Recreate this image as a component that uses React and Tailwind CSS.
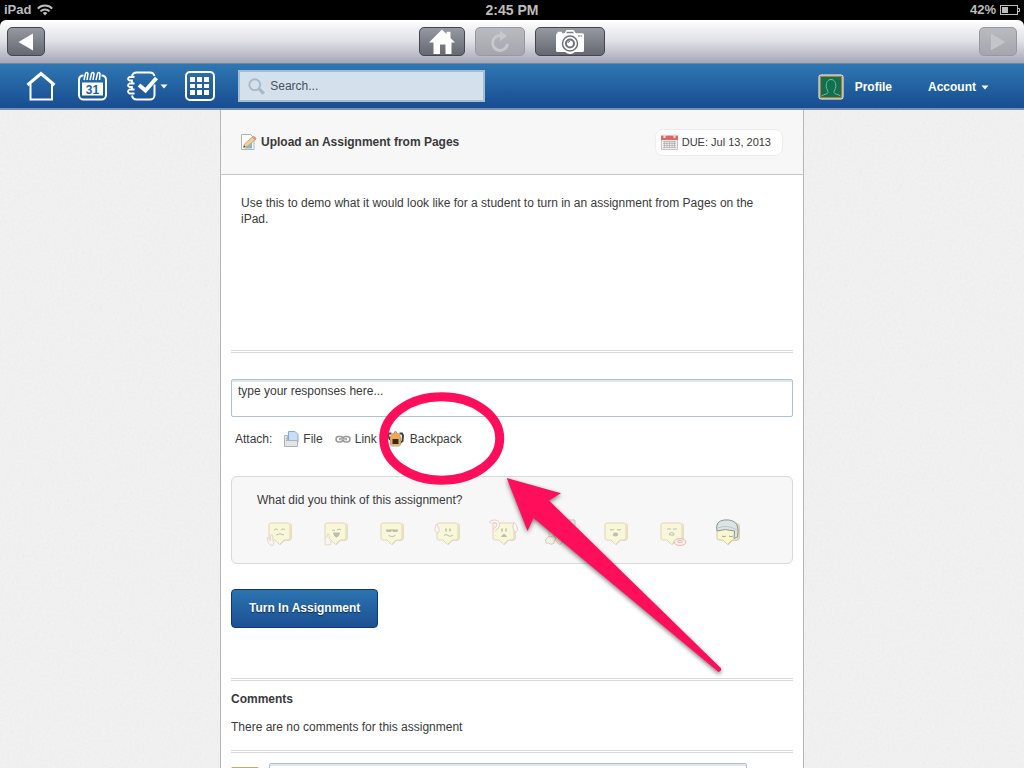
import { useState } from 'react';

const MOODS = [
  { id: 'victory', label: 'Done' },
  { id: 'thumbs', label: 'Liked it' },
  { id: 'cool', label: 'Easy' },
  { id: 'sweat', label: 'Hard' },
  { id: 'confused', label: 'Confused' },
  { id: 'busy', label: 'Busy' },
  { id: 'bored', label: 'Bored' },
  { id: 'hungry', label: 'Hungry' },
  { id: 'sleepy', label: 'Sleepy' },
];

function StatusBar() {
  return (
    <div className="grid grid-cols-3 items-center h-5 shrink-0 bg-black text-[#bcbcbc] font-bold text-[13px] leading-5">
      <div className="flex items-center gap-1.5 pl-1">
        <span>iPad</span>
        <svg width="16" height="12" viewBox="0 0 16 12" fill="none" stroke="#bcbcbc" strokeWidth="2">
          <path d="M0.8 4.6C4.8 0.6 11.2 0.6 15.2 4.6" />
          <path d="M3.5 7.4C6 5 10 5 12.5 7.4" />
          <path d="M5.6 9L8 11.6 10.4 9C9 7.8 7 7.8 5.6 9Z" fill="#bcbcbc" stroke="none" />
        </svg>
      </div>
      <span className="text-center text-sm leading-5">2:45 PM</span>
      <div className="flex items-center justify-end gap-1 pr-1">
        <span>42%</span>
        <svg width="20" height="10" viewBox="0 0 20 10" fill="none" stroke="#bcbcbc">
          <rect x="0.5" y="0.5" width="17" height="9" />
          <path d="M18 3.5h1.5v3H18" />
          <rect x="2" y="2" width="6" height="6" fill="#bcbcbc" stroke="none" />
        </svg>
      </div>
    </div>
  );
}

function ToolButton({ label, className, disabled, children }) {
  return (
    <button
      type="button"
      aria-label={label}
      disabled={disabled}
      className={`flex items-center justify-center h-[29px] rounded-[5px] border ${
        disabled
          ? 'border-[#96989e] bg-linear-to-b from-[#b9bbc0] to-[#a3a6ad]'
          : 'border-[#43464d] bg-linear-to-b from-[#9699a0] to-[#646972]'
      } ${className}`}
    >
      {children}
    </button>
  );
}

function BrowserBar() {
  return (
    <div className="shrink-0 bg-black">
      <div className="flex items-center justify-between h-11 px-[7px] rounded-t-md border-b border-[#7c8194] bg-linear-to-b from-white via-[#dfe0e6] to-[#a4a7b6]">
        <ToolButton label="Back" className="w-[38px]">
          <svg width="16" height="18" viewBox="0 0 16 18"><path d="M15 0.5v17L0.5 9z" fill="#fff" /></svg>
        </ToolButton>
        <div className="flex gap-2.5">
          <ToolButton label="Home" className="w-[46px]">
            <svg width="26" height="25" viewBox="0 0 26 25">
              <path d="M13 0.5L17.5 5V2.8h4V9L26 13.5h-3.5V25h-6v-9.5h-5.5V25H4.5V13.5H0z" fill="#fff" />
            </svg>
          </ToolButton>
          <ToolButton label="Reload" className="w-[50px]" disabled>
            <svg width="20" height="24" viewBox="0 0 20 24" fill="none">
              <path d="M11 5.5A7.5 7.5 0 1 0 17.5 14" stroke="#c6c8cc" strokeWidth="3" />
              <path d="M10 0.5L17 6 10 11z" fill="#c6c8cc" />
            </svg>
          </ToolButton>
          <ToolButton label="Take picture" className="w-[70px]">
            <svg width="28" height="24" viewBox="0 0 28 24" fill="none">
              <path d="M1.5 1.8h4.5v1.5h2.5L10.500 0h7l2.500 3.300h6.500a1.500 1.500 0 0 1 1.500 1.500v15.700a1.500 1.500 0 0 1-1.500 1.500H19a8 8 0 0 1-10 0H1.500A1.500 1.500 0 0 1 0 20.500V4.800a1.500 1.500 0 0 1 1.500-1.500z" fill="#fff" />
              <path d="M10.5 2.5h7" stroke="#7b7f87" strokeWidth="1.5" />
              <circle cx="14" cy="13.5" r="7.5" stroke="#6d7179" strokeWidth="1.5" />
              <circle cx="14" cy="13.5" r="4" stroke="#6d7179" strokeWidth="2" />
              <path d="M12 13a2 2 0 0 1 2-1.8" stroke="#6d7179" />
              <path d="M22 6h4" stroke="#6d7179" strokeDasharray="2 0.5" />
            </svg>
          </ToolButton>
        </div>
        <ToolButton label="Forward" className="w-[38px]" disabled>
          <svg width="16" height="18" viewBox="0 0 16 18"><path d="M1 0.5v17L15.5 9z" fill="#c3c5ca" /></svg>
        </ToolButton>
      </div>
    </div>
  );
}

function Caret() {
  return <svg width="8" height="5" viewBox="0 0 8 5"><path d="M0.5 0.5h7L4 4.5z" fill="#fff" /></svg>;
}

function NavBar() {
  const [query, setQuery] = useState('');

  return (
    <nav className="flex items-center justify-between shrink-0 h-[46px] pl-[26px] pr-[35px] border-b-2 border-[#7b8fae] bg-linear-to-b from-[#2f77b2] to-[#184d91] text-white text-xs font-bold">
      <div className="flex items-center">
        <a href="#home" aria-label="Home" className="mr-[21px]">
          <svg width="30" height="30" viewBox="0 0 30 30" fill="none" stroke="#fff">
            <path d="M4.500 13v15.500h21.500V13" strokeWidth="2" />
            <path d="M1.500 14L15 2.500 28.500 14" strokeWidth="3" />
          </svg>
        </a>
        <a href="#calendar" aria-label="Calendar" className="mr-[18px]">
          <svg width="31" height="30" viewBox="0 0 31 30" fill="none" stroke="#fff" strokeWidth="2">
            <path d="M6.500 4.500C3 4.500 2 6.500 2 9v15a4.500 4.500 0 0 0 4.500 4.500h18A4.500 4.500 0 0 0 29 24V9c0-2.500-1-4.500-4.500-4.500" />
            <path d="M7 9l1.500-6.500q1.500-2 2.500 0L10 9m3 0l1.500-6.500q1.500-2 2.500 0L16 9m3 0l1.500-6.500q1.500-2 2.500 0L22.500 9" strokeWidth="1.5" />
            <rect x="5" y="11.5" width="21" height="13" fill="#fff" stroke="none" />
            <text x="15.5" y="22.5" textAnchor="middle" fontSize="12" fontWeight="700" fill="#24609f" stroke="none">31</text>
          </svg>
        </a>
        <button type="button" aria-label="Assignments" className="flex items-center gap-[2px] mr-[17px]">
          <svg width="32" height="30" viewBox="0 0 32 30" fill="none" stroke="#fff">
            <path d="M6 5.500C6.500 2.500 8 1.500 10.500 1.500h13.500c2.500 0 4 1.500 4.500 3.500M28.500 13.500V24a4.500 4.500 0 0 1-4.500 4.500H10.500C8 28.500 6.500 27 6 24.500" strokeWidth="2" />
            <path d="M8.500 6H3.500Q0.500 8 3.500 9.500H6V12M8.500 12.500H3.500Q0.500 14.500 3.500 16H6v2.500M8.500 18.500H3.500Q0.500 20.500 3.500 22.500H8.500" strokeWidth="1.8" />
            <path d="M13 14l6.500 5.500L30.500 7" strokeWidth="4" />
          </svg>
          <Caret />
        </button>
        <a href="#apps" aria-label="Apps" className="mr-[23px]">
          <svg width="30" height="30" viewBox="0 0 30 30" fill="none">
            <rect x="1" y="1" width="28" height="28" rx="4" stroke="#fff" strokeWidth="2" />
            <path d="M5 6h5v5H5zM12 6h5v5h-5zM19 6h5v5h-5zM5 13h5v4H5zM12 13h5v4h-5zM19 13h5v4h-5zM5 19h5v5H5zM12 19h5v5h-5zM19 19h5v5h-5z" fill="#fff" />
          </svg>
        </a>
        <label className="flex items-center gap-[5px] w-[247px] h-8 pl-2 border-2 border-[#a3bdd3] bg-[#d4e0eb]">
          <svg width="19" height="19" viewBox="0 0 19 19" fill="none" stroke="#a6b8c8">
            <circle cx="7.500" cy="7.500" r="6" strokeWidth="2" />
            <path d="M12 12l5.500 5.500" strokeWidth="3.5" />
          </svg>
          <input
            type="text"
            aria-label="Search"
            placeholder="Search..."
            value={query}
            onChange={(e) => setQuery(e.target.value)}
            className="w-full bg-transparent text-xs font-normal text-[#45525f] placeholder:text-[#45525f] focus:outline-none"
          />
        </label>
      </div>
      <div className="flex items-center gap-9 pt-0.5">
        <a href="#profile" className="flex items-center gap-[11px]">
          <svg width="26" height="26" viewBox="0 0 26 26" fill="none">
            <rect x="0.5" y="0.5" width="25" height="25" rx="3" fill="#fffdf4" />
            <rect x="1.5" y="1.5" width="23" height="23" rx="1" fill="#a5803f" />
            <rect x="3" y="3" width="20" height="20" fill="#10704f" />
            <path d="M3.500 22c2.500-2 6-1.500 6.500-3.500.3-1.500-1.500-3-1.800-6C8 8 10 5.500 13 5.500s5 2.500 4.800 7c-.3 3-2 4.500-1.800 6 .5 2 4 1.500 6.500 3.500" stroke="#7fb6a1" />
          </svg>
          Profile
        </a>
        <button type="button" className="flex items-center gap-[5px]">
          Account
          <Caret />
        </button>
      </div>
    </nav>
  );
}

const FACES = {
  victory: (
    <>
      <path d="M11 12q2-2.500 4 0M18 12q2-2.500 4 0M13 17q4-2.500 8 0" />
      <path d="M7 27l-2-3-1-4.500 2 .5 1.500 3v-6h2l.5 6 1 1.500-1 3z" fill="#faf6ea" stroke="#d8bd92" />
    </>
  ),
  thumbs: (
    <>
      <path d="M13 12l3 .5M18 12q2-2 4 0" />
      <path d="M14.500 15h6q-1 4-3 4t-3-4z" fill="#8d8264" />
      <path d="M6 27v-7l2-1 .5-3H10l.5 5 1.500 1v4.500z" fill="#faf6ea" stroke="#d8bd92" />
    </>
  ),
  cool: (
    <>
      <path d="M11 12h5v1.500h-4zM18 12h5l-1 1.500h-4zM15 12h4" fill="#8d8264" />
      <path d="M13.500 17.500q3.500 2.500 7 0" />
    </>
  ),
  sweat: (
    <>
      <path d="M15 10.500v3M19 10.500v3" strokeWidth="1.5" />
      <path d="M13 17.500q2-2 4 0t5-.5" />
      <path d="M5.500 6Q3 11 4 13t3.500 1.500Q9.500 12 5.500 6z" fill="#fafafa" stroke="#e0a896" />
    </>
  ),
  confused: (
    <>
      <path d="M15 10.500v3M19 10.500v3" strokeWidth="1.5" />
      <path d="M14.500 18.500q2.500-4 5 0z" fill="#8d8264" />
      <path d="M3.500 5.500Q5 2.500 9 3.500t1 6L7.500 11.500v2M7 17v.5" stroke="#dba994" strokeWidth="3.5" />
      <path d="M3.500 5.500Q5 2.500 9 3.500t1 6L7.500 11.500v2M7 17v.5" stroke="#fff" strokeWidth="1.5" />
      <path d="M27 4Q31 8 30.500 12t-4 0Q25 8 27 4z" fill="#fafafa" stroke="#dba994" />
    </>
  ),
  busy: (
    <>
      <path d="M15 12v2M20 12v2M14 18h6" />
      <path d="M4 20q2-3 4-1 2-3 4 0 2 2-1 4 1 3-2 3-2 1-3-1-4 1-3-2-2-1 1-3z" fill="#f5eee4" stroke="#b09c76" />
      <path d="M26 2h6v6l-4 3" stroke="#8d9ca2" fill="#d3dcdf" />
    </>
  ),
  bored: (
    <>
      <path d="M11 11.500q2 1 4 0M18 11.500q2 1 4 0" />
      <ellipse cx="16.500" cy="16.500" rx="2.200" ry="1.500" fill="#8d8264" />
    </>
  ),
  hungry: (
    <>
      <path d="M12 11h4M18 11h4M14.500 15.500q2.500-2 4.500 0v1.500h-4.500z" />
      <ellipse cx="25" cy="24" rx="6" ry="3.500" fill="#f7e3da" stroke="#cf7f6c" />
      <ellipse cx="25" cy="23.500" rx="2.500" ry="1" fill="#f6f6f6" stroke="#cf7f6c" />
    </>
  ),
  sleepy: (
    <>
      <path d="M11 18q2 1.500 4 0M18 18q2 1.500 4 0" />
      <path d="M6 13Q4 3 13 2q10-1 13 5 2 4 .5 12l-3.500 1.500.5-7.500Q14 10 6 13z" fill="#d2dddd" stroke="#5d6e70" />
      <path d="M7 10q9-4 19 2" stroke="#a3b2b2" />
    </>
  ),
};

function MoodIcon({ id }) {
  return (
    <svg width="34" height="30" viewBox="0 0 34 30" fill="none" stroke="#8d8264" className={id === 'sleepy' ? 'opacity-70' : 'opacity-50'}>
      <path d="M27 6q1.500 0 1.500 2v12q0 2-2 2.500h-5l-4.500 4.500" fill="#e9dfb8" stroke="#d6c48d" />
      <path d="M8 5h17a2 2 0 0 1 2 2v13a2 2 0 0 1-2 2h-4l-4.500 4.500L12 22H8a2 2 0 0 1-2-2V7a2 2 0 0 1 2-2z" fill="#fbf7bd" stroke="#cdb582" />
      {FACES[id]}
    </svg>
  );
}

function Divider() {
  return <div className="h-[3px] border-y border-[#d9d9d9]" />;
}

function AssignmentHeader() {
  return (
    <header className="flex items-center justify-between h-[65px] px-5 border-b border-[#c6c6c6] bg-[#f7f7f7]">
      <h1 className="flex items-center gap-1 text-xs font-bold">
        <svg width="16" height="16" viewBox="0 0 16 16" fill="none">
          <path d="M0.500 0.500h9l3.500 3.500v11.500H0.500z" fill="#fdfefe" stroke="#a9b6b6" />
          <path d="M3 14.500l8-6v6z" fill="#8fb4cc" />
          <path d="M2.500 13.500l1-3.500 8.500-7.500q2.500 0 3 2.500L6 12.500z" fill="#f0d19c" stroke="#c0a880" />
          <path d="M12 2.500q2.500 0 3 2.500l-1.500 1-2.500-2.700z" fill="#d9988a" />
          <path d="M2.500 13.500l.5-2 1.500 1.300z" fill="#444" />
        </svg>
        Upload an Assignment from Pages
      </h1>
      <div className="flex items-center gap-1 h-[27px] pl-[5px] pr-[11px] rounded-lg border border-[#ededed] bg-white text-[11px]">
        <svg width="17" height="16" viewBox="0 0 17 16" fill="none">
          <path d="M0.500 5h16v10.500H0.500z" fill="#f0eeee" stroke="#c9c4c4" />
          <path d="M0 1.500h17V6H0z" fill="#e06666" />
          <path d="M3.500 0v4M13.500 0v4" stroke="#f7dede" strokeWidth="2" />
          <path d="M2 7.500h13M2 9.500h13M2 11.500h13M2 13.500h13M3.500 7v7M6 7v7M8.500 7v7M11 7v7M13.500 7v7" stroke="#b5b0b0" strokeWidth="0.8" />
        </svg>
        DUE: Jul 13, 2013
      </div>
    </header>
  );
}

function AttachBar() {
  return (
    <div className="flex items-center mt-3.5 pl-1 h-4">
      <span>Attach:</span>
      <a href="#file" className="flex items-center gap-1 ml-3">
        <svg width="15" height="16" viewBox="0 0 15 16" fill="none">
          <path d="M4.500 0.500h6.500l3 3v8H4.500z" fill="#c9def5" stroke="#8aa9cf" />
          <path d="M0.500 4.500h3v5h10v6H0.500z" fill="#e4e4e4" stroke="#a9b4bd" />
          <path d="M2 7.500h1M2 9.500h1" stroke="#a9b4bd" />
        </svg>
        File
      </a>
      <a href="#link" className="flex items-center gap-1 ml-3">
        <svg width="16" height="9" viewBox="0 0 16 9" fill="none" stroke="#9a9a9a" strokeWidth="1.5">
          <rect x="1" y="1.500" width="7" height="5.500" rx="2.700" />
          <rect x="8" y="1.500" width="7" height="5.500" rx="2.700" />
          <path d="M4 4.200h8" stroke="#8c8c8c" strokeWidth="2" />
          <path d="M4.500 4.200h7" stroke="#e2e2e2" strokeWidth="0.8" />
        </svg>
        Link
      </a>
      <a href="#backpack" className="flex items-center gap-1.5 ml-2.5">
        <svg width="17" height="16" viewBox="0 0 17 16" fill="none">
          <path d="M4.500 2.500H2L1 4l2 5M12.500 2.500H15l1 2L15.500 10l-2 1.500" stroke="#3c4148" strokeWidth="2" />
          <path d="M7 1.500q1.500-1.500 3 0" stroke="#8e6127" />
          <path d="M3.500 7Q4 2 8.500 2T13.500 7v6q0 2-2 2h-6q-2 0-2-2z" fill="#f0ab50" stroke="#d99a4a" />
          <path d="M5.500 8h6v5h-6z" fill="#38291a" />
          <path d="M4 14.500h9" stroke="#c9bfae" strokeWidth="1.5" />
        </svg>
        Backpack
      </a>
    </div>
  );
}

// circle and arrow pointing out the backpack link
function Annotation() {
  return (
    <svg width="582" height="658" viewBox="221 110 582 658" fill="none" aria-hidden="true" className="absolute top-0 left-0 pointer-events-none">
      <ellipse cx="441.7" cy="438.5" rx="58" ry="41.7" stroke="#ff0f5b" strokeWidth="9" />
      <path
        d="M506.7 478L561 493.3 549 500.500L721 668.300Q722 671.500 718.500 672L533.500 518 527.500 531Z"
        fill="#ff0f5b"
        className="drop-shadow-[0_2px_2px_rgba(0,0,0,0.5)]"
      />
    </svg>
  );
}

function App() {
  const [answer, setAnswer] = useState('');
  const [mood, setMood] = useState(null);
  const [comment, setComment] = useState('');

  return (
    <div className="flex flex-col h-screen overflow-hidden bg-[#f2f2f2] font-['Liberation_Sans',Arial,sans-serif] text-xs leading-4 text-[#3a3a3a]">
      <StatusBar />
      <BrowserBar />
      <NavBar />
      <div className="relative flex-1 min-h-0">
        {/* paper grain */}
        <svg width="100%" height="100%" aria-hidden="true" className="absolute inset-0 opacity-8">
          <filter id="grain">
            <feTurbulence type="fractalNoise" baseFrequency="0.4" numOctaves="2" />
            <feColorMatrix type="saturate" values="0" />
          </filter>
          <rect width="100%" height="100%" filter="url(#grain)" />
        </svg>
        <main className="relative w-full max-w-[584px] h-full mx-auto border-x border-[#b4b6ba] bg-white">
          <AssignmentHeader />
          <p className="px-5 pt-5 h-[175px]">
            Use this to demo what it would look like for a student to turn in an assignment from Pages on the iPad.
          </p>
          <div className="px-2.5">
            <Divider />
            <textarea
              aria-label="Response"
              placeholder="type your responses here..."
              value={answer}
              onChange={(e) => setAnswer(e.target.value)}
              className="block w-full h-[38px] mt-[26px] px-1.5 py-[3px] resize-none rounded-xs border border-[#adc3d3] bg-white shadow-[inset_0_2px_1px_#dfe5e9] placeholder:text-[#3a3a3a] focus:outline-none"
            />
            <AttachBar />
            <fieldset className="block mt-[29px] h-[88px] px-[25px] pt-[15px] rounded-md border border-[#d9d9d9] bg-[#f7f7f7]">
              <p>What did you think of this assignment?</p>
              <div className="flex gap-[22px] mt-2.5 pl-1.5">
                {MOODS.map((m) => (
                  <button
                    key={m.id}
                    type="button"
                    aria-label={m.label}
                    aria-pressed={mood === m.id}
                    onClick={() => setMood(m.id)}
                  >
                    <MoodIcon id={m.id} />
                  </button>
                ))}
              </div>
            </fieldset>
            <button
              type="submit"
              className="block h-[39px] mt-[25px] px-[17px] pb-0.5 rounded-sm border border-[#12396e] bg-linear-to-b from-[#2c74b0] to-[#1c5093] text-white font-bold [text-shadow:0_1px_1px_#0d2b52]"
            >
              Turn In Assignment
            </button>
            <div className="mt-[50px]"><Divider /></div>
            <h2 className="mt-[10px] font-bold">Comments</h2>
            <p className="mt-3 mb-[15px]">There are no comments for this assignment</p>
            <Divider />
            <div className="flex gap-2.5 mt-[10px]">
              <div className="w-7 h-7 mt-1 rounded-xs border-2 border-[#cda75f] bg-[#10704f]" />
              <textarea
                aria-label="Comment"
                value={comment}
                onChange={(e) => setComment(e.target.value)}
                className="block w-[478px] h-[38px] resize-none rounded-xs border border-[#adc3d3] bg-white shadow-[inset_0_2px_1px_#dfe5e9] focus:outline-none"
              />
            </div>
          </div>
          <Annotation />
        </main>
      </div>
    </div>
  );
}

export default App;
